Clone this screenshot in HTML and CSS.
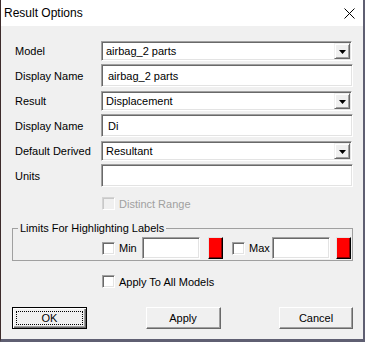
FILE: index.html
```html
<!DOCTYPE html>
<html lang="en">
<head>
  <meta charset="UTF-8">
  <title>Result Options</title>
  <link rel="stylesheet" href="styles.css">
</head>
<body>
  <div class="window">
      <div class="titlebar">
          <span class="title">Result Options</span>
          <svg class="close" width="11" height="11" viewBox="0 0 11 11">
              <path d="M0.5 0.5 L10.5 10.5 M10.5 0.5 L0.5 10.5" stroke="#000" stroke-width="1" fill="none"/>
          </svg>
      </div>

      <div class="content">
          <div class="row">
              <span class="label">Model</span>
              <div class="combo sunken">
                  <span class="combo-text">airbag_2 parts</span>
                  <span class="drop"><svg width="7" height="4" viewBox="0 0 7 4"><path d="M0 0H7L3.5 4Z" fill="#000"/></svg></span>
              </div>
          </div>
          <div class="row">
              <span class="label">Display Name</span>
              <div class="field sunken">airbag_2 parts</div>
          </div>
          <div class="row">
              <span class="label">Result</span>
              <div class="combo sunken">
                  <span class="combo-text">Displacement</span>
                  <span class="drop"><svg width="7" height="4" viewBox="0 0 7 4"><path d="M0 0H7L3.5 4Z" fill="#000"/></svg></span>
              </div>
          </div>
          <div class="row">
              <span class="label">Display Name</span>
              <div class="field sunken">Di</div>
          </div>
          <div class="row">
              <span class="label">Default Derived</span>
              <div class="combo sunken">
                  <span class="combo-text">Resultant</span>
                  <span class="drop"><svg width="7" height="4" viewBox="0 0 7 4"><path d="M0 0H7L3.5 4Z" fill="#000"/></svg></span>
              </div>
          </div>
          <div class="row units-row">
              <span class="label">Units</span>
              <div class="field sunken"></div>
          </div>

          <div class="check-row">
              <span class="check sunken disabled"></span>
              <span class="check-text disabled-text">Distinct Range</span>
          </div>

          <fieldset class="group">
              <legend>Limits For Highlighting Labels</legend>
              <div class="limits">
                  <span class="check sunken"></span>
                  <span class="lim-label">Min</span>
                  <div class="lim-field sunken"></div>
                  <span class="swatch min-swatch"></span>
                  <span class="check sunken max-check"></span>
                  <span class="lim-label">Max</span>
                  <div class="lim-field sunken"></div>
                  <span class="swatch max-swatch"></span>
              </div>
          </fieldset>

          <div class="check-row apply-row">
              <span class="check sunken"></span>
              <span class="check-text">Apply To All Models</span>
          </div>

          <div class="button-group">
              <button class="btn default"><span class="focus">OK</span></button>
              <button class="btn">Apply</button>
              <button class="btn cancel">Cancel</button>
          </div>
      </div>
  </div>
</body>
</html>
```

FILE: styles.css
```css
body {
    margin: 0;
    background-color: #f0f0f0;
    font-family: 'Liberation Sans', Arial, sans-serif;
    font-size: 11px;
    color: #000;
}

.window {
    width: 365px;
    height: 342px;
    box-sizing: border-box;
    border-left: 1px solid #3d2b2b;
    border-right: 2px solid #5f5f72;
    border-bottom: 3px solid #5f5f72;
    background-color: #f0f0f0;
}

.titlebar {
    height: 26px;
    background-color: #fff;
    display: flex;
    align-items: center;
    justify-content: space-between;
    padding: 0 8px 0 3px;
    font-size: 12px;
}

.close {
    display: block;
    margin-top: 1px;
}

.content {
    padding: 15px 10px 0 14px;
}

.row {
    display: flex;
    align-items: center;
    margin-bottom: 3px;
}

.row:nth-child(even) {
    margin-bottom: 4px;
}

.row.units-row {
    margin-bottom: 10px;
}

.label {
    width: 86px;
    flex: none;
}

/* sunken 3d edge, used by combos, fields and checkboxes */
.sunken {
    box-sizing: border-box;
    background-color: #fff;
    border: 1px solid;
    border-color: #a0a0a0 #fff #fff #a0a0a0;
    box-shadow: inset 1px 1px 0 #696969, inset -1px -1px 0 #e3e3e3;
}

.combo {
    flex: 1;
    height: 20px;
    margin-right: 1px;
    padding: 1px;
    display: flex;
    align-items: center;
}

.combo-text {
    flex: 1;
    padding-left: 3px;
}

.drop {
    width: 16px;
    height: 16px;
    flex: none;
    box-sizing: border-box;
    background-color: #f0f0f0;
    border: 1px solid;
    border-color: #f0f0f0 #696969 #696969 #f0f0f0;
    box-shadow: inset 1px 1px 0 #fff, inset -1px -1px 0 #a0a0a0;
    display: flex;
    align-items: center;
    justify-content: center;
}

.drop svg {
    display: block;
    margin-top: 1px;
}

.field {
    flex: 1;
    height: 23px;
    padding-left: 6px;
    display: flex;
    align-items: center;
}

.check-row {
    display: flex;
    align-items: center;
    height: 13px;
    padding-left: 87px;
}

.check {
    width: 13px;
    height: 13px;
    flex: none;
}

.check.disabled {
    background-color: #f0f0f0;
    border-color: #d4d4d4 #fff #fff #d4d4d4;
    box-shadow: inset 1px 1px 0 #c8c8c8, inset -1px -1px 0 #f0f0f0;
}

.check-text {
    margin-left: 4px;
}

.disabled-text {
    color: #a0a0a0;
}

.group {
    margin: 11px 0 0 -3px;
    padding: 2px 0 1px 5px;
    border: 1px solid #a0a0a0;
    min-width: 0;
}

.group legend {
    padding: 0 2px;
    line-height: 14px;
}

.limits {
    display: flex;
    align-items: center;
    height: 22px;
    margin-left: 84px;
}

.lim-label {
    width: 23px;
    margin-left: 4px;
}

.lim-field {
    width: 58px;
    height: 22px;
}

.swatch {
    width: 15px;
    height: 22px;
    box-sizing: border-box;
    background-color: #ff0000;
    border: 1px solid;
    border-color: #e3e3e3 #000 #000 #e3e3e3;
    box-shadow: inset -1px -1px 0 #8b0000;
}

.min-swatch {
    margin-left: 8px;
}

.max-check {
    margin-left: 9px;
}

.max-swatch {
    margin-left: 6px;
}

.apply-row {
    margin-top: 14px;
}

.button-group {
    display: flex;
    justify-content: space-between;
    margin: 19px 0 0 -3px;
}

.btn {
    width: 75px;
    height: 22px;
    box-sizing: border-box;
    padding: 0;
    font: inherit;
    color: #000;
    background-color: #f0f0f0;
    border: 1px solid;
    border-color: #fff #696969 #696969 #fff;
    box-shadow: inset -1px -1px 0 #a0a0a0;
    display: flex;
    align-items: center;
    justify-content: center;
}

.btn.default {
    border-color: #000;
    box-shadow: inset 1px 1px 0 #fff, inset -1px -1px 0 #696969, inset -2px -2px 0 #a0a0a0;
    padding: 3px;
}

.btn.cancel {
    width: 74px;
}

.focus {
    flex: 1;
    align-self: stretch;
    border: 1px dotted #000;
    display: flex;
    align-items: center;
    justify-content: center;
}
```
